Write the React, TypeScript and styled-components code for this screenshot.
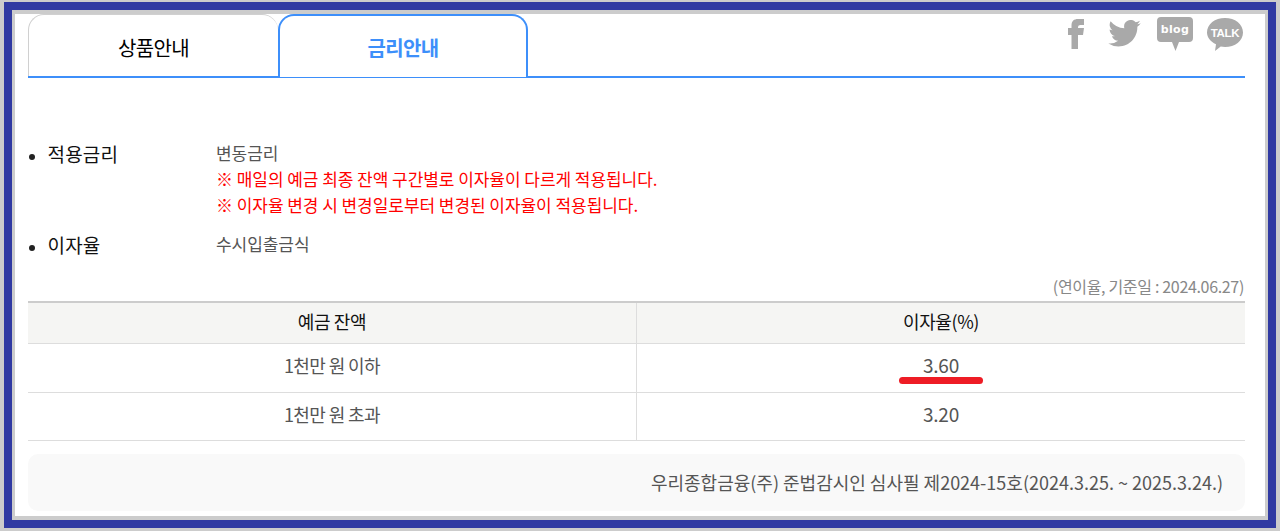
import React from 'react';
import styled, { createGlobalStyle } from 'styled-components';

const GlobalStyle = createGlobalStyle`
  html, body {
    margin: 0;
    padding: 0;
    background: #cccccc;
  }
  body {
    font-family: "Noto Sans CJK KR", "Noto Sans", sans-serif;
  }
  * {
    box-sizing: border-box;
  }
`;

const Page = styled.div`
  height: 531px;
  padding: 2px 4px 3px;
  background: #cccccc;
`;

const Frame = styled.div`
  height: 100%;
  border: 8px solid #303aa2;
`;

const Inner = styled.div`
  height: 100%;
  border: solid #cccccc;
  border-width: 4px 3px;
  background: #ffffff;
  padding: 0 20px 0 13px;
`;

const TabBar = styled.div`
  display: flex;
  justify-content: space-between;
  height: 64px;
  border-bottom: 2px solid #3d8ffa;
`;

const Tabs = styled.div`
  display: flex;
`;

const Tab = styled.div<{ $active?: boolean }>`
  width: 250px;
  height: ${(p) => (p.$active ? '63px' : '62px')};
  display: flex;
  align-items: center;
  justify-content: center;
  padding-top: ${(p) => (p.$active ? '1px' : '3px')};
  font-size: 20px;
  letter-spacing: -0.6px;
  font-weight: ${(p) => (p.$active ? 700 : 400)};
  color: ${(p) => (p.$active ? '#3d8ffa' : '#000000')};
  background: #ffffff;
  border: solid ${(p) => (p.$active ? '#3d8ffa' : '#d0d0d0')};
  border-width: ${(p) => (p.$active ? '2px 2px 0' : '1px 0 0 1px')};
  border-radius: 16px 16px 0 0;
`;

const Social = styled.div`
  display: flex;
  align-items: flex-start;
  gap: 14px;
  padding: 3px 2px 0 0;
`;

const InfoList = styled.div`
  display: flex;
  flex-direction: column;
  gap: 12px;
  margin-top: 61px;
`;

const InfoRow = styled.div`
  display: flex;
  align-items: flex-start;
`;

const Label = styled.div`
  position: relative;
  width: 188px;
  padding: 1px 0 0 19.500px;
  font-size: 19px;
  line-height: 28px;
  letter-spacing: 0.2px;
  color: #111111;

  &::before {
    content: '';
    position: absolute;
    left: 1px;
    top: 15px;
    width: 6px;
    height: 6px;
    border-radius: 50%;
    background: #222222;
  }
`;

const Values = styled.div`
  padding-top: 1px;
  font-size: 17px;
  line-height: 26px;
  letter-spacing: -0.05px;
  color: #555555;
`;

const Notice = styled.div`
  color: #ff0000;
`;

const Caption = styled.div`
  margin-top: 15px;
  padding: 0 1px 2px 0;
  text-align: right;
  font-size: 16px;
  line-height: 25px;
  letter-spacing: -0.33px;
  color: #888888;
`;

const RateTable = styled.table`
  width: 100%;
  table-layout: fixed;
  border-collapse: collapse;
  border-top: 2px solid #cccccc;
`;

const HeadCell = styled.th`
  height: 41px;
  padding: 0 0 4px;
  font-size: 18px;
  font-weight: 400;
  letter-spacing: -0.4px;
  color: #111111;
  background: #f5f5f3;
  border-bottom: 1px solid #dddddd;

  & + & {
    border-left: 1px solid #dddddd;
  }
`;

const Cell = styled.td<{ $height: number; $number?: boolean }>`
  position: relative;
  height: ${(p) => p.$height}px;
  padding: 0 0 ${(p) => (p.$number ? '6px' : '5px')};
  text-align: center;
  font-size: ${(p) => (p.$number ? '19px' : '18px')};
  letter-spacing: ${(p) => (p.$number ? '-0.2px' : '-0.6px')};
  color: #555555;
  border-bottom: 1px solid #dddddd;

  & + & {
    border-left: 1px solid #dddddd;
  }
`;

const RedMark = styled.span`
  position: absolute;
  left: 262px;
  top: 33px;
  width: 84px;
  height: 7px;
  border-radius: 4px;
  background: #ee1c25;
`;

const Footer = styled.div`
  margin-top: 13px;
  height: 57px;
  display: flex;
  align-items: center;
  justify-content: flex-end;
  padding-right: 22px;
  border-radius: 10px;
  background: #f9f9f9;
  font-size: 18px;
  color: #555555;
`;

const FacebookIcon = styled.svg`
  margin-top: 2px;
  margin-left: -2px;
`;

const TwitterIcon = styled.svg`
  margin-top: 3px;
  margin-left: 10px;
`;

const BadgeIcon = styled.svg`
  margin-left: 2px;
`;

const TalkIcon = styled.svg`
  margin-top: 1px;
`;

const SocialLinks = () => (
  <Social>
    <FacebookIcon width="16" height="30" viewBox="0 0 16 30">
      <path
        fill="#a9a9a9"
        d="M3.500 30V16H0V9h3.500V6.500C3.500 2 6 0 10 0h6v6h-3.500C11 6 10 6.800 10 8.500V9h6l-1 7h-5v14z"
      />
    </FacebookIcon>
    <TwitterIcon width="33" height="27" viewBox="0 0 24 20">
      <path
        fill="#a9a9a9"
        d="M24 2.400c-.9.400-1.800.7-2.800.8 1-.6 1.800-1.600 2.200-2.700-1 .6-2 1-3.100 1.200A4.900 4.900 0 0 0 11.900 6.200 13.900 13.900 0 0 1 1.700 1a4.900 4.900 0 0 0 1.500 6.600c-.8 0-1.600-.2-2.200-.6 0 2.400 1.700 4.400 3.900 4.900-.7.200-1.500.2-2.200.1.600 2 2.400 3.400 4.600 3.400A9.900 9.900 0 0 1 0 17.400 14 14 0 0 0 7.500 19.600c9.100 0 14.300-7.700 14-14.600 1-.7 1.800-1.600 2.500-2.600z"
      />
    </TwitterIcon>
    <BadgeIcon width="36" height="34" viewBox="0 0 36 34">
      <path
        fill="#a9a9a9"
        d="M4 0h28a4 4 0 0 1 4 4v17a4 4 0 0 1-4 4H22l-3.500 9-3.500-9H4a4 4 0 0 1-4-4V4a4 4 0 0 1 4-4z"
      />
      <text x="18" y="15.500" textAnchor="middle" fontFamily="'DejaVu Sans', sans-serif" fontWeight="700" fontSize="11" letterSpacing="0.4" fill="#ffffff">
        blog
      </text>
    </BadgeIcon>
    <TalkIcon width="36" height="33" viewBox="0 0 36 33">
      <path
        fill="#a9a9a9"
        d="M18 0c10 0 18 6 18 14.500S28 29 18 29c-1.500 0-3-.1-4.300-.4L8 33l1-6.700C3.600 23.800 0 19.500 0 14.500 0 6 8 0 18 0z"
      />
      <text x="18" y="19" textAnchor="middle" fontFamily="'Liberation Sans', sans-serif" fontWeight="700" fontSize="11.500" letterSpacing="-0.3" fill="#ffffff">
        TALK
      </text>
    </TalkIcon>
  </Social>
);

export default function App() {
  return (
    <>
      <GlobalStyle />
      <Page>
        <Frame>
          <Inner>
            <TabBar>
              <Tabs>
                <Tab>상품안내</Tab>
                <Tab $active>금리안내</Tab>
              </Tabs>
              <SocialLinks />
            </TabBar>

            <InfoList>
              <InfoRow>
                <Label>적용금리</Label>
                <Values>
                  변동금리
                  <Notice>※ 매일의 예금 최종 잔액 구간별로 이자율이 다르게 적용됩니다.</Notice>
                  <Notice>※ 이자율 변경 시 변경일로부터 변경된 이자율이 적용됩니다.</Notice>
                </Values>
              </InfoRow>
              <InfoRow>
                <Label>이자율</Label>
                <Values>수시입출금식</Values>
              </InfoRow>
            </InfoList>

            <Caption>(연이율, 기준일 : 2024.06.27)</Caption>
            <RateTable>
              <thead>
                <tr>
                  <HeadCell>예금 잔액</HeadCell>
                  <HeadCell>이자율(%)</HeadCell>
                </tr>
              </thead>
              <tbody>
                <tr>
                  <Cell $height={49}>1천만 원 이하</Cell>
                  <Cell $height={49} $number>
                    3.60
                    <RedMark />
                  </Cell>
                </tr>
                <tr>
                  <Cell $height={48}>1천만 원 초과</Cell>
                  <Cell $height={48} $number>
                    3.20
                  </Cell>
                </tr>
              </tbody>
            </RateTable>

            <Footer>우리종합금융(주) 준법감시인 심사필 제2024-15호(2024.3.25. ~ 2025.3.24.)</Footer>
          </Inner>
        </Frame>
      </Page>
    </>
  );
}
